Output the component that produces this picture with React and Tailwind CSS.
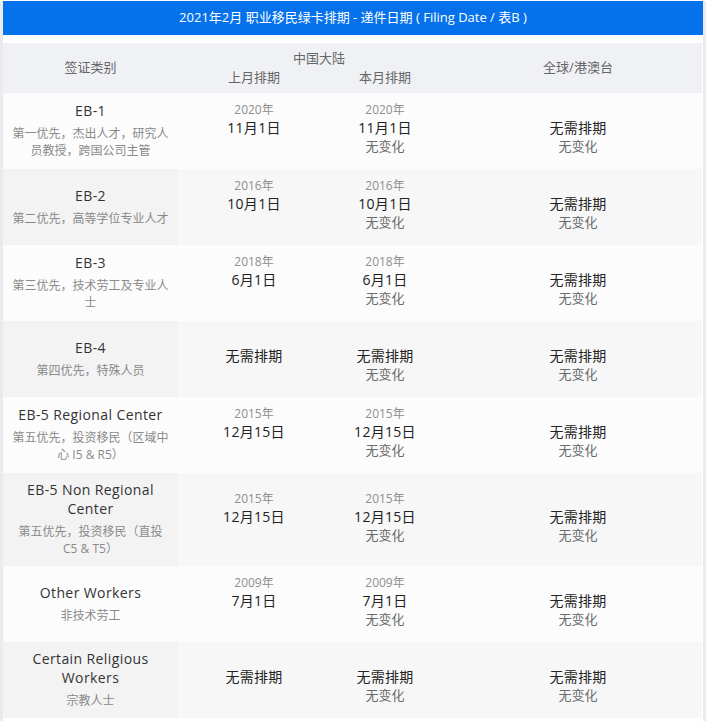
import React from "react";

const rows = [
  {
    title: ["EB-1"],
    sub: "第一优先，杰出人才，研究人员教授，跨国公司主管",
    prev: ["2020年", "11月1日"],
    cur: ["2020年", "11月1日"],
    striped: false,
  },
  {
    title: ["EB-2"],
    sub: "第二优先，高等学位专业人才",
    prev: ["2016年", "10月1日"],
    cur: ["2016年", "10月1日"],
    striped: true,
  },
  {
    title: ["EB-3"],
    sub: "第三优先，技术劳工及专业人士",
    prev: ["2018年", "6月1日"],
    cur: ["2018年", "6月1日"],
    striped: false,
  },
  {
    title: ["EB-4"],
    sub: "第四优先，特殊人员",
    prev: null,
    cur: null,
    striped: true,
  },
  {
    title: ["EB-5 Regional Center"],
    sub: "第五优先，投资移民（区域中心 I5 & R5）",
    prev: ["2015年", "12月15日"],
    cur: ["2015年", "12月15日"],
    striped: false,
  },
  {
    title: ["EB-5 Non Regional Center"],
    sub: "第五优先，投资移民（直投 C5 & T5）",
    prev: ["2015年", "12月15日"],
    cur: ["2015年", "12月15日"],
    striped: true,
  },
  {
    title: ["Other Workers"],
    sub: "非技术劳工",
    prev: ["2009年", "7月1日"],
    cur: ["2009年", "7月1日"],
    striped: false,
  },
  {
    title: ["Certain Religious Workers"],
    sub: "宗教人士",
    prev: null,
    cur: null,
    striped: true,
  },
];

function DataCell({ year, date, change, extra = "" }) {
  return (
    <div className={`flex flex-col items-center justify-center pb-[6px] ${extra}`}>
      <div className="h-[18px] leading-[18px] text-[12px] text-[#8f8f8f]">{year}</div>
      <div className="h-[18px] leading-[18px] text-[14px] text-[#222] tracking-[0.3px]">{date}</div>
      <div className="h-[18px] leading-[18px] text-[13px] text-[#6a6a6a]">{change}</div>
    </div>
  );
}

export default function App() {
  return (
    <div className="w-[706px] h-[721px] bg-white border-l-[3px] border-r-[3px] border-[#ebebeb] font-[family-name:Open_Sans,Noto_Sans_CJK_SC,sans-serif]">
      <div className="mt-[1px] h-[34px] bg-[#0572ec] text-white text-[13px] flex items-center justify-center">
        2021年2月 职业移民绿卡排期 - 递件日期 ( Filing Date / 表B )
      </div>
      <div className="mt-[8px] mr-[1px]">
        <div className="grid grid-cols-[175px_152px_130px_1fr] h-[50px] bg-[#f0f1f5] text-[13px] text-[#666]">
          <div className="flex items-center justify-center">签证类别</div>
          <div className="col-span-2 flex flex-col justify-center">
            <div className="text-center leading-[19px]">中国大陆</div>
            <div className="grid grid-cols-[152px_130px] leading-[19px]">
              <div className="text-center">上月排期</div>
              <div className="text-center pr-[20px]">本月排期</div>
            </div>
          </div>
          <div className="flex items-center justify-center pr-[6px]">全球/港澳台</div>
        </div>
        {rows.map((r, i) => (
          <div
            key={i}
            className={`grid grid-cols-[175px_152px_130px_1fr] min-h-[76px] ${
              r.striped ? "bg-[#f7f7f7]" : "bg-[#fcfcfc]"
            }`}
          >
            <div
              className={`flex flex-col items-center justify-center text-center px-[8px] pt-[7px] pb-[9px] ${
                r.striped ? "bg-[#f3f3f3]" : ""
              }`}
            >
              <div className="text-[14px] leading-[19px] text-[#333] mb-[5px] tracking-[0.4px]">{r.title}</div>
              <div className="text-[12px] leading-[17px] text-[#8a8a8a]">{r.sub}</div>
            </div>
            {r.prev ? (
              <DataCell year={r.prev[0]} date={r.prev[1]} change="" />
            ) : (
              <DataCell year="" date="无需排期" change="" />
            )}
            {r.cur ? (
              <DataCell year={r.cur[0]} date={r.cur[1]} change="无变化" extra="pr-[20px]" />
            ) : (
              <DataCell year="" date="无需排期" change="无变化" extra="pr-[20px]" />
            )}
            <DataCell year="" date="无需排期" change="无变化" extra="pr-[6px]" />
          </div>
        ))}
      </div>
    </div>
  );
}
